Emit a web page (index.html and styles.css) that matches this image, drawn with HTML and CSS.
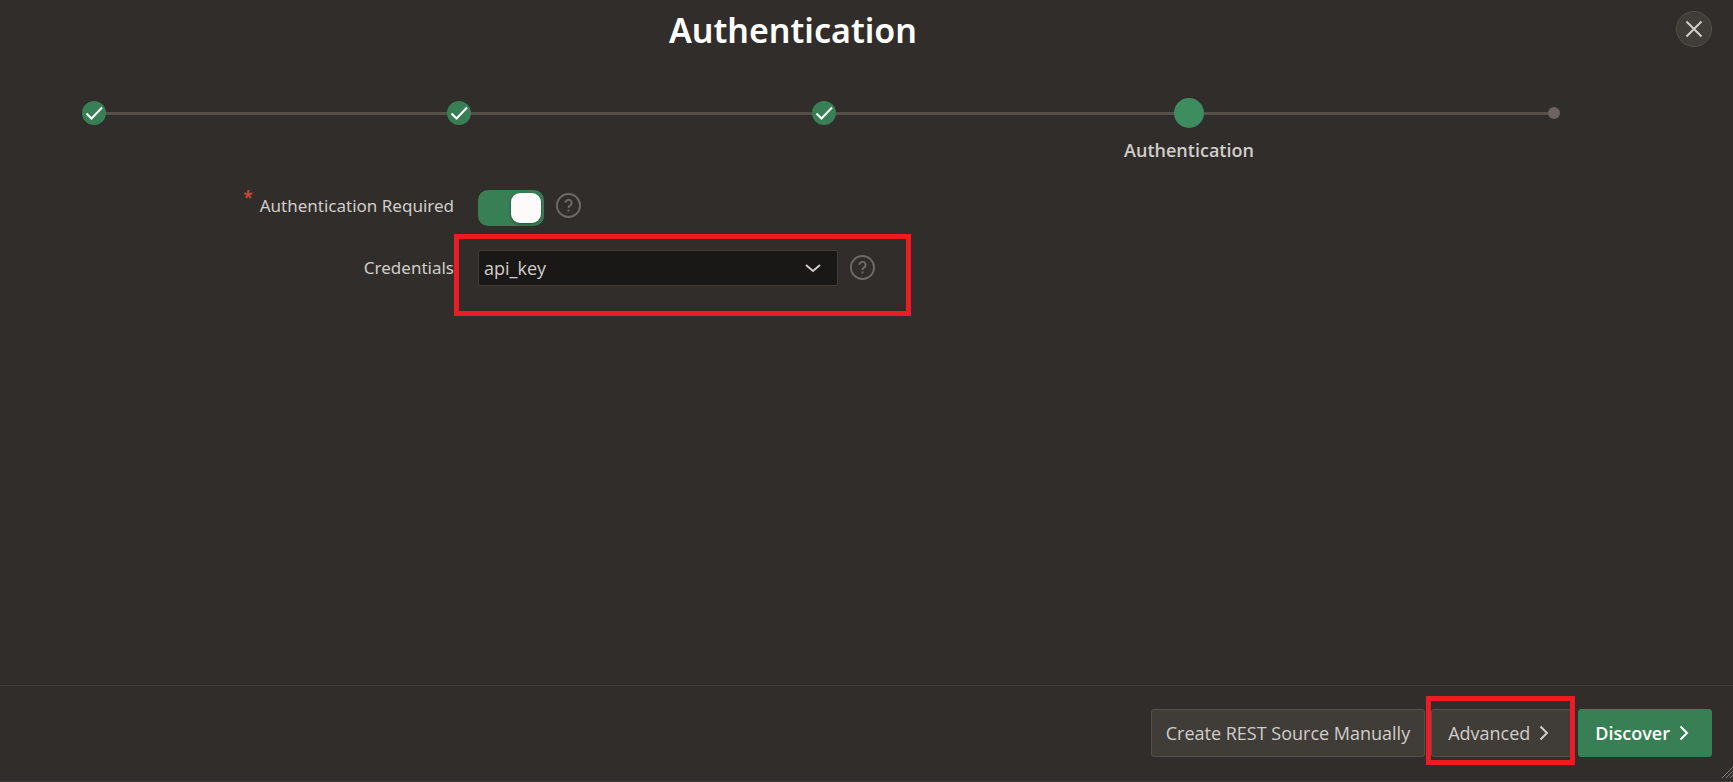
FILE: index.html
```html
<!DOCTYPE html>
<html lang="en">
<head>
<meta charset="utf-8">
<title>Authentication</title>
<link rel="stylesheet" href="styles.css">
</head>
<body>
<main class="dialog">
  <header class="dialog-header">
    <h1 class="dialog-title">Authentication</h1>
    <button class="close" type="button" aria-label="Close">
      <svg width="18" height="18" viewBox="0 0 18 18"><path d="M1.5 1.5l15 15M16.5 1.5l-15 15"/></svg>
    </button>
  </header>

  <ol class="steps">
    <li class="step"><span class="marker done"><svg width="18" height="14" viewBox="0 0 18 14"><path d="M1.5 7.5l5 5L17 1.5"/></svg></span></li>
    <li class="step"><span class="marker done"><svg width="18" height="14" viewBox="0 0 18 14"><path d="M1.5 7.5l5 5L17 1.5"/></svg></span></li>
    <li class="step"><span class="marker done"><svg width="18" height="14" viewBox="0 0 18 14"><path d="M1.5 7.5l5 5L17 1.5"/></svg></span></li>
    <li class="step" aria-current="step"><span class="marker current"></span><span class="step-label">Authentication</span></li>
    <li class="step"><span class="marker pending"></span></li>
  </ol>

  <form class="form" id="auth-form">
    <div class="row">
      <label class="label" for="auth-required"><span class="required">*</span>Authentication Required</label>
      <div class="field">
        <input class="switch" id="auth-required" type="checkbox" role="switch" checked>
        <button class="help" type="button" aria-label="Help: Authentication Required">
          <svg width="25" height="25" viewBox="0 0 26 26"><circle cx="13" cy="13" r="12"/><path d="M9.8 10.2a3.2 3.2 0 1 1 4.7 2.9c-1.1.6-1.5 1.200-1.5 2.600"/><path class="dot" d="M12 17.200h2v2h-2z"/></svg>
        </button>
      </div>
    </div>
    <div class="row">
      <label class="label" for="credentials">Credentials</label>
      <div class="field highlighted">
        <span class="select-wrap">
          <select class="select" id="credentials"><option>api_key</option></select>
          <svg class="chevron" width="16" height="10" viewBox="0 0 16 10"><path d="M1 2l7 6 7-6"/></svg>
        </span>
        <button class="help" type="button" aria-label="Help: Credentials">
          <svg width="25" height="25" viewBox="0 0 26 26"><circle cx="13" cy="13" r="12"/><path d="M9.8 10.2a3.2 3.2 0 1 1 4.7 2.9c-1.1.6-1.5 1.200-1.5 2.600"/><path class="dot" d="M12 17.200h2v2h-2z"/></svg>
        </button>
      </div>
    </div>
  </form>

  <footer class="dialog-footer">
    <button class="button" type="button">Create REST Source Manually</button>
    <span class="highlighted-button">
      <button class="button with-arrow" type="button">Advanced
        <svg width="10" height="16" viewBox="0 0 10 16"><path d="M1.5 1.5L8 8l-6.5 6.5"/></svg>
      </button>
    </span>
    <button class="button with-arrow primary" type="submit" form="auth-form">Discover
      <svg width="10" height="16" viewBox="0 0 10 16"><path d="M1.5 1.5L8 8l-6.5 6.5"/></svg>
    </button>
    <svg class="resize" width="12" height="12" viewBox="0 0 12 12"><path d="M1 11L12 0M5 11l7-7M9 11l3-3"/></svg>
  </footer>
</main>
</body>
</html>
```
FILE: styles.css
```css
* { box-sizing: border-box; }

body {
  margin: 0;
  background: #312d2a;
  color: #d0cdca;
  font: 18px/24px "Open Sans", "Noto Sans", sans-serif;
}

svg {
  display: block;
  flex: none;
  fill: none;
  stroke: currentColor;
  stroke-width: 2;
}

button, select {
  font: inherit;
  color: inherit;
}

.dialog {
  display: flex;
  flex-direction: column;
  min-height: 100vh;
  border-bottom: 1px solid #403c38;
}

.dialog-header {
  display: flex;
  align-items: flex-start;
  padding: 11px 21px 0 0;
}

.dialog-title {
  flex: 1;
  margin: 0 90px 0 0;
  color: #fff;
  font-family: "Noto Sans", sans-serif;
  font-size: 34px;
  line-height: 38px;
  font-weight: 600;
  text-align: center;
}

.close {
  display: grid;
  place-items: center;
  width: 36px;
  height: 36px;
  padding: 0;
  border: 1px solid #55504a;
  border-radius: 50%;
  background: #403c38;
}

.steps {
  position: relative;
  display: flex;
  justify-content: space-between;
  margin: 49px 164px 0 79px;
  padding: 0;
  list-style: none;
}

.steps::before {
  content: "";
  position: absolute;
  top: 14px;
  left: 15px;
  right: 15px;
  height: 3px;
  background: #55514a;
}

.step {
  position: relative;
  display: flex;
  flex-direction: column;
  align-items: center;
  gap: 10px;
  width: 30px;
}

.marker {
  display: grid;
  place-items: center;
  margin: auto 0;
  border-radius: 50%;
}

.step:not([aria-current]) { height: 30px; }

.done {
  width: 24px;
  height: 24px;
  background: #387f55;
  color: #fff;
}

.current {
  width: 30px;
  height: 30px;
  background: #3e8d60;
}

.pending {
  width: 12px;
  height: 12px;
  background: #6b6460;
}

.step-label {
  font-weight: 600;
  white-space: nowrap;
}

.form {
  display: flex;
  flex-direction: column;
  gap: 24px;
  padding-top: 26px;
}

.row {
  display: flex;
  align-items: flex-start;
  gap: 24px;
}

.label {
  width: 454px;
  font-family: "Noto Sans", sans-serif;
  font-size: 17px;
  line-height: 36px;
  text-align: right;
}

.required {
  margin-right: 7px;
  color: #c74634;
  font-weight: 700;
  vertical-align: 8px;
  line-height: 1;
}

.field {
  position: relative;
  display: flex;
  align-items: flex-start;
  gap: 12px;
}

.highlighted::after {
  content: "";
  position: absolute;
  inset: -16px -36px -30px -24px;
  border: 5px solid #ed1c24;
  pointer-events: none;
}

.switch {
  display: flex;
  justify-content: flex-end;
  appearance: none;
  width: 66px;
  height: 36px;
  margin: 2px 0 0;
  padding: 3px;
  border-radius: 10px;
  background: #387f55;
}

.switch::before {
  content: "";
  width: 30px;
  height: 30px;
  border-radius: 9px;
  background: #fcfbfa;
  box-shadow: 0 1px 3px #0006;
}

.switch:not(:checked) {
  justify-content: flex-start;
  background: #55514a;
}

.help {
  height: 35px;
  padding: 0;
  border: 0;
  background: none;
  color: #6f6a65;
}

.help .dot {
  fill: currentColor;
  stroke: none;
}

.select-wrap { position: relative; }

.select {
  display: block;
  appearance: none;
  width: 360px;
  height: 36px;
  padding: 0 40px 0 5px;
  border: 1px solid #403c38;
  border-radius: 2px;
  background: #1a1816;
}

.chevron {
  position: absolute;
  top: 13px;
  right: 17px;
  pointer-events: none;
}

.dialog-footer {
  position: relative;
  display: flex;
  justify-content: flex-end;
  gap: 6px;
  margin-top: auto;
  padding: 23px 21px 24px;
  border-top: 1px solid #403c38;
}

.button {
  display: flex;
  align-items: center;
  gap: 9px;
  height: 48px;
  padding: 0 14px;
  border: 1px solid #55504a;
  border-radius: 3px;
  background: #403c38;
}

.with-arrow { padding: 0 22px 0 16px; }

.primary {
  border-color: #387f55;
  background: #387f55;
  color: #fff;
  font-weight: 600;
}

.highlighted-button { position: relative; }

.highlighted-button::after {
  content: "";
  position: absolute;
  inset: -13px -3px -8px -5px;
  border: 5px solid #ed1c24;
  pointer-events: none;
}

.resize {
  position: absolute;
  right: 0;
  bottom: 2px;
  color: #85807b;
  stroke-width: 1;
}
```
